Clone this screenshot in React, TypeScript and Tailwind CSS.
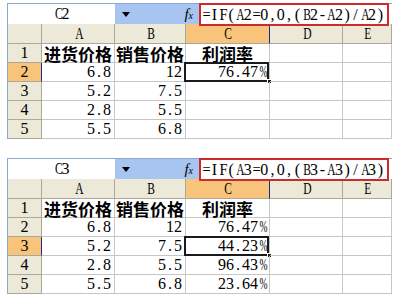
const serif = { fontFamily: '"Liberation Serif", "Noto Sans CJK SC", serif' };

type Sheet = {
  name: string;
  formula: string;
  selRow: number;
  rows: string[][];
};

const sheets: Sheet[] = [
  {
    name: "C2",
    formula: "=IF(A2=0,0,(B2-A2)/A2)",
    selRow: 2,
    rows: [
      ["进货价格", "销售价格", "利润率"],
      ["6.8", "12", "76.47%"],
      ["5.2", "7.5", ""],
      ["2.8", "5.5", ""],
      ["5.5", "6.8", ""],
    ],
  },
  {
    name: "C3",
    formula: "=IF(A3=0,0,(B3-A3)/A3)",
    selRow: 3,
    rows: [
      ["进货价格", "销售价格", "利润率"],
      ["6.8", "12", "76.47%"],
      ["5.2", "7.5", "44.23%"],
      ["2.8", "5.5", "96.43%"],
      ["5.5", "6.8", "23.64%"],
    ],
  },
];

const cols = ["A", "B", "C", "D", "E"];

// narrow the wide Times glyphs so they fit a half-width slot like SimSun
function squeeze(ch: string) {
  if (ch === "%") return "inline-block overflow-visible text-center scale-x-[0.6]";
  if ("ABCDE".includes(ch)) return "inline-block text-center scale-x-[0.72]";
  if (ch === "=" || ch === "F") return "inline-block text-center scale-x-[0.9]";
  return "inline-block text-center";
}

// SimSun-style half-width cells: every character gets the same slot
function Fixed({ text, w }: { text: string; w: number }) {
  return (
    <span className="inline-flex" style={serif}>
      {text.split("").map((ch, i) => (
        <span key={i} className={squeeze(ch)} style={{ width: w }}>
          {ch}
        </span>
      ))}
    </span>
  );
}

function FormulaBar({ name, formula }: { name: string; formula: string }) {
  return (
    <div className="flex h-[21px] border-t border-[#8ea8d2]">
      <div className="flex w-[107px] items-center justify-center bg-white text-[16px] leading-none text-black">
        <Fixed text={name} w={8} />
      </div>
      <div className="flex w-[84px] items-center bg-[#a8c4f0]">
        <svg width="8" height="5" viewBox="0 0 8 5" className="ml-[7px]">
          <path d="M0 0 H8 L4 5 Z" fill="#000" />
        </svg>
        <span className="ml-auto mr-[6px] text-[15px] italic leading-none text-black" style={serif}>
          f<span className="text-[10px]">x</span>
        </span>
      </div>
      <div className="relative flex flex-1 items-center bg-white">
        <div className="pointer-events-none absolute left-0 top-[-1px] h-[23px] w-[190px] border-2 border-[#cf2a2a]" />
        <span className="pl-[3px] text-[16px] leading-none text-black">
          <Fixed text={formula} w={8.3} />
        </span>
      </div>
    </div>
  );
}

function Grid({ sheet }: { sheet: Sheet }) {
  return (
    <div className="grid grid-cols-[34px_73px_71px_84px_73px_49px] grid-rows-[20px_repeat(5,19px)]">
      <div className="border-b border-r border-[#aca899] bg-[#ece9d8]" />
      {cols.map((c) => (
        <div
          key={c}
          className={
            c === "C"
              ? "flex items-center justify-center border-b border-r border-b-[#aca899] border-r-[#1c2c8c] bg-[#f8c47c] text-[16px] leading-none text-black"
              : "flex items-center justify-center border-b border-r border-[#aca899] bg-[#ece9d8] text-[16px] leading-none text-black"
          }
        >
          <Fixed text={c} w={9} />
        </div>
      ))}
      {sheet.rows.map((row, i) => {
        const r = i + 1;
        const active = r === sheet.selRow;
        return [
          <div
            key={`h${r}`}
            className={
              active
                ? "flex items-center justify-center border-b border-r border-b-[#aca899] border-r-[#1c2c8c] bg-[#f8c47c] text-[16px] leading-none text-black"
                : "flex items-center justify-center border-b border-r border-[#aca899] bg-[#ece9d8] text-[16px] leading-none text-black"
            }
            style={serif}
          >
            {r}
          </div>,
          ...[0, 1, 2, 3, 4].map((ci) => {
            const v = row[ci] ?? "";
            const sel = active && ci === 2;
            return (
              <div
                key={`${r}-${ci}`}
                className={
                  r === 1
                    ? "relative flex items-center justify-center whitespace-nowrap border-b border-r border-[#c6c6c6] text-[17px] font-bold leading-none text-black"
                    : "relative flex items-center justify-end whitespace-nowrap border-b border-r border-[#c6c6c6] pr-[3px] text-[16px] leading-none text-black"
                }
                style={r === 1 ? { fontFamily: '"Noto Sans CJK SC", sans-serif' } : undefined}
              >
                {r === 1 ? v : <Fixed text={v} w={8} />}
                {sel && (
                  <>
                    <div className="pointer-events-none absolute left-[-2px] top-[-1px] h-[20px] w-[85px] border-2 border-[#1a1a1a]" />
                    <div className="pointer-events-none absolute bottom-[-3px] right-[-3px] h-[5px] w-[5px] border border-white bg-[#1a1a1a]" />
                  </>
                )}
              </div>
            );
          }),
        ];
      })}
    </div>
  );
}

export default function App() {
  return (
    <div className="h-[297px] w-[403px] overflow-hidden bg-white pl-[7px] pt-[3px]">
      <div className="flex flex-col gap-[19px]">
        {sheets.map((s) => (
          <div key={s.name} className="w-[385px] border-l border-[#8ea8d2]">
            <FormulaBar name={s.name} formula={s.formula} />
            <Grid sheet={s} />
          </div>
        ))}
      </div>
    </div>
  );
}
